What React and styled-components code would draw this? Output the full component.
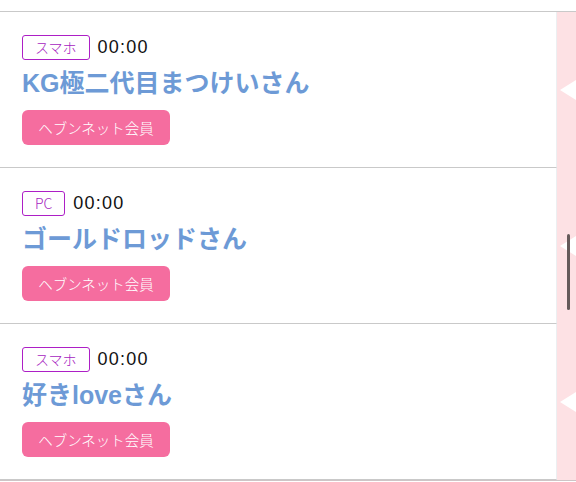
import styled, { createGlobalStyle } from "styled-components";

const GlobalStyle = createGlobalStyle`
  html, body { margin: 0; padding: 0; background: #ffffff; }
  body { font-family: "Noto Sans CJK JP", "Liberation Sans", sans-serif; }
`;

const casts = [
  { device: "スマホ", time: "00:00", name: "KG極二代目まつけいさん" },
  { device: "PC", time: "00:00", name: "ゴールドロッドさん" },
  { device: "スマホ", time: "00:00", name: "好きloveさん" },
];

export default function App() {
  return (
    <>
      <GlobalStyle />
      <Page>
        <TopGap />
        <List>
          {casts.map((c, i) => (
            <Row key={i}>
              <Body>
                <Meta>
                  <Device>{c.device}</Device>
                  <Time>{c.time}</Time>
                </Meta>
                <Name>{c.name}</Name>
                <Member>ヘブンネット会員</Member>
              </Body>
              <Side>
                <Notch />
              </Side>
            </Row>
          ))}
          <Scrollbar />
        </List>
      </Page>
    </>
  );
}

const Page = styled.div`
width: 576px;
height: 482px;
overflow: hidden;
background: #ffffff;
`;

const TopGap = styled.div`
height: 11px;
border-bottom: 1px solid #c9c9c9;
`;

const List = styled.div`
position: relative;
border-bottom: 1px solid #cfc4c6;
`;

const Row = styled.div`
display: flex;
height: 156px;
&:last-of-type > div:first-child { border-bottom: none; }
`;

const Body = styled.div`
flex: 1;
border-bottom: 1px solid #c9c9c9;
border-right: 1px solid #eceff1;
padding: 22px 0 0 22px;
display: flex;
flex-direction: column;
align-items: flex-start;
`;

const Meta = styled.div`
display: flex;
align-items: center;
gap: 8px;
height: 26px;
`;

const Device = styled.span`
box-sizing: border-box;
height: 25px;
padding: 0 12px;
border: 1.5px solid #ad1fc6;
border-radius: 3px;
color: #a61cc0;
font-size: 14px;
font-weight: 300;
line-height: 22px;
`;

const Time = styled.span`
font-family: "Liberation Sans", sans-serif;
font-size: 18px;
letter-spacing: 1.2px;
color: #111111;
`;

const Name = styled.div`
margin-top: 7px;
font-size: 25px;
font-weight: 700;
line-height: 33px;
color: #6d9ad6;
font-family: "Liberation Sans", "Noto Sans CJK JP", sans-serif;
`;

const Member = styled.div`
margin-top: 10px;
width: 148px;
height: 35px;
border-radius: 6px;
background: #f56d9f;
color: #ffffff;
font-size: 14.5px;
font-weight: 300;
display: flex;
align-items: center;
justify-content: center;
`;

const Side = styled.div`
width: 19px;
background: #fde1e4;
display: flex;
align-items: center;
justify-content: flex-end;
`;

const Notch = styled.div`
width: 0;
height: 0;
border-top: 10px solid transparent;
border-bottom: 10px solid transparent;
border-right: 16px solid #ffffff;
`;

const Scrollbar = styled.div`
position: absolute;
right: 6px;
top: 222px;
width: 3px;
height: 76px;
border-radius: 2px;
background: #655a5a;
`;
